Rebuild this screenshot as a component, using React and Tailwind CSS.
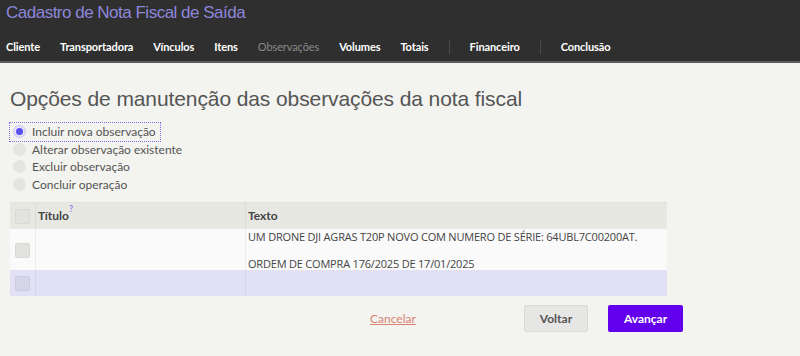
const NAV = [
  { label: 'Cliente' },
  { label: 'Transportadora' },
  { label: 'Vínculos' },
  { label: 'Itens' },
  { label: 'Observações', active: true },
  { label: 'Volumes' },
  { label: 'Totais' },
  { sep: true },
  { label: 'Financeiro' },
  { sep: true },
  { label: 'Conclusão' },
]

const OPTIONS = [
  'Incluir nova observação',
  'Alterar observação existente',
  'Excluir observação',
  'Concluir operação',
]

function Box() {
  return <span className="block h-[15px] w-[15px] rounded-[2px] bg-[#e2e2de] border border-[#d8d8d4]" />
}

export default function App() {
  return (
    <div className="h-[356px] w-[800px] overflow-hidden bg-[#f3f3ef] font-['Lato',sans-serif] text-[#444]">
      {/* top bar */}
      <div className="h-[63px] bg-[#2f2f2f] border-b-2 border-[#5a5a5a] flex flex-col">
        <h1 className="pl-[6px] pt-[2px] text-[17px] leading-[22px] text-[#8d87dc] font-['Liberation_Sans',sans-serif] tracking-[-0.5px]">
          Cadastro de Nota Fiscal de Saída
        </h1>
        <nav className="mt-[16px] flex items-center pl-[6px] text-[11px] leading-[14px] font-bold text-white tracking-[-0.1px]">
          {NAV.map((n, i) =>
            n.sep ? (
              <span key={i} className="mr-[20px] h-[14px] w-px bg-[#4a4a4a]" />
            ) : (
              <span key={i} className={`mr-[20px] ${n.active ? 'text-[#8a8a8a] font-normal' : ''}`}>
                {n.label}
              </span>
            )
          )}
        </nav>
      </div>

      <div className="pl-[10px]">
        <h2 className="mt-[22px] text-[21px] leading-[28px] text-[#555] font-['Liberation_Sans',sans-serif] tracking-[-0.1px]">
          Opções de manutenção das observações da nota fiscal
        </h2>

        <div className="mt-[10px] flex flex-col text-[12px] leading-[17.5px] text-[#555]">
          {OPTIONS.map((o, i) => (
            <label
              key={o}
              className={`flex items-center gap-[6px] w-fit pl-[3px] pr-[4px] ${
                i === 0 ? 'outline-1 outline-dotted outline-[#7b74e6] w-[163px]' : ''
              }`}
            >
              {i === 0 ? (
                <span className="flex h-[13px] w-[13px] items-center justify-center rounded-full bg-[#e4e3f5] border border-[#c8c5f0]">
                  <span className="h-[7px] w-[7px] rounded-full bg-[#5a4ff0]" />
                </span>
              ) : (
                <span className="h-[13px] w-[13px] rounded-full bg-[#e4e4e0]" />
              )}
              {o}
            </label>
          ))}
        </div>

        {/* table */}
        <div className="mt-[9px] w-[657px] text-[12px] text-[#444]">
          <div className="grid grid-cols-[26px_210px_1fr] h-[27px] bg-[#e8e8e3] border-t border-[#e0e0dc]">
            <div className="flex items-center justify-center border-r border-[#dcdcd7]"><Box /></div>
            <div className="flex items-center pl-[2px] font-bold border-r border-[#dcdcd7]">
              Título<sup className="text-[#8d7de6] text-[9px] -mt-[6px]">?</sup>
            </div>
            <div className="flex items-center pl-[2px] font-bold">Texto</div>
          </div>
          <div className="grid grid-cols-[26px_210px_1fr] h-[41px] bg-[#fafafa]">
            <div className="flex items-center justify-center border-r border-[#ececea]"><Box /></div>
            <div className="border-r border-[#ececea]" />
            <div className="pl-[2px] pt-[1px] leading-[14px] text-[11px] tracking-[-0.2px] font-['Open_Sans',sans-serif]">
              <div>UM DRONE DJI AGRAS T20P NOVO COM NUMERO DE SÉRIE: 64UBL7C00200AT.</div>
              <div className="mt-[13px]">ORDEM DE COMPRA 176/2025 DE 17/01/2025</div>
            </div>
          </div>
          <div className="grid grid-cols-[26px_210px_1fr] h-[26px] bg-[#e1e0f4]">
            <div className="flex items-center justify-center border-r border-[#d6d5ec]">
              <span className="block h-[15px] w-[15px] rounded-[2px] bg-[#d6d5e8] border border-[#cccbe0]" />
            </div>
            <div className="border-r border-[#d6d5ec]" />
            <div />
          </div>
        </div>

        {/* actions */}
        <div className="mt-[9px] flex items-center w-[673px] text-[12px] font-bold">
          <a className="ml-[360px] text-[#d98474] underline font-normal">Cancelar</a>
          <button className="ml-auto h-[27px] w-[64px] rounded-[2px] bg-[#e6e6e4] border border-[#dadad6] text-[#555]">Voltar</button>
          <button className="ml-[20px] h-[27px] w-[75px] rounded-[2px] bg-[#6200ee] text-white">Avançar</button>
        </div>
      </div>
    </div>
  )
}
